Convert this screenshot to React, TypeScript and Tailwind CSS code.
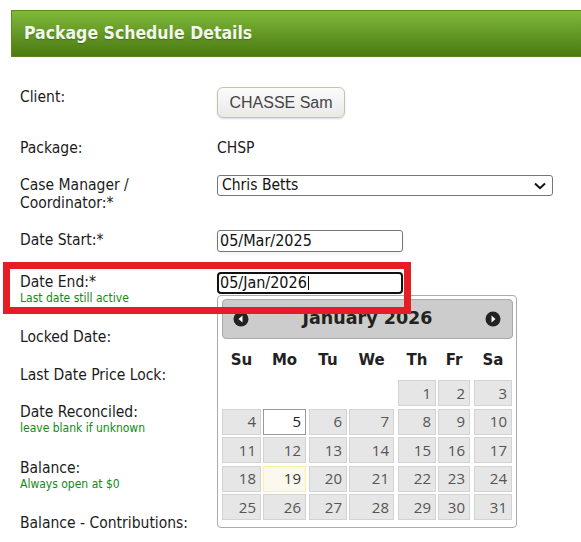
import React from "react";

const FONT = "font-['Tahoma','DejaVu_Sans_Condensed','Liberation_Sans',sans-serif]";

const colW = ["w-[39px]", "w-[43px]", "w-[38px]", "w-[45px]", "w-[38px]", "w-[32px]", "w-[38px]"];
const dayNames = ["Su", "Mo", "Tu", "We", "Th", "Fr", "Sa"];

function Arrow({ dir }: { dir: "l" | "r" }) {
  return (
    <svg width="16" height="16" viewBox="0 0 16 16">
      <circle cx="8" cy="8" r="7.5" fill="#222" />
      {dir === "l" ? (
        <path d="M9.5 4.5 L5.5 8 L9.5 11.5 Z" fill="#fff" />
      ) : (
        <path d="M6.5 4.5 L10.5 8 L6.5 11.5 Z" fill="#fff" />
      )}
    </svg>
  );
}

function Calendar() {
  const cells: (number | null)[] = [null, null, null, null];
  for (let d = 1; d <= 31; d++) cells.push(d);
  return (
    <div className="absolute left-[217px] top-[295px] w-[300px] bg-white border border-[#aaaaaa] rounded-[4px] px-[4px] pt-[3px] pb-[7px]">
      <div className="relative h-[40px] w-[291px] bg-[#cccccc] border border-[#aaaaaa] rounded-[4px] flex items-center justify-center">
        <span className="font-['DejaVu_Sans',sans-serif] font-bold text-[17.5px] text-[#222222] leading-none">January 2026</span>
        <div className="absolute left-[10px] top-[11px]"><Arrow dir="l" /></div>
        <div className="absolute right-[11px] top-[11px]"><Arrow dir="r" /></div>
      </div>
      <div className="mt-[2px] h-[38px] grid grid-cols-[41px_46px_40px_49px_40px_36px_40px] items-center">
        {dayNames.map((n, i) => (
          <div key={n} className={`${colW[i]} text-center font-['DejaVu_Sans',sans-serif] font-bold text-[15px] text-[#222222]`}>
            {n}
          </div>
        ))}
      </div>
      <div className="mt-[1px] grid grid-cols-[41px_46px_40px_49px_40px_36px_40px] gap-y-[2.5px]">
        {cells.map((d, i) => {
          const col = i % 7;
          if (d === null) return <div key={i} className={`${colW[col]} h-[26px]`} />;
          let cls = "bg-[#e6e6e6] border-[#d3d3d3] text-[#555555]";
          if (d === 5) cls = "bg-white border-[#999999] text-[#212121]";
          if (d === 19) cls = "bg-[#fbf9ee] border-[#fcefa1] text-[#363636]";
          return (
            <div
              key={i}
              className={`${colW[col]} h-[26px] border ${cls} flex items-center justify-end pr-[4px] font-['Open_Sans',sans-serif] text-[15px] leading-none`}
            >
              {d}
            </div>
          );
        })}
      </div>
    </div>
  );
}

function Label({ children, sub }: { children: React.ReactNode; sub?: string }) {
  return (
    <div className="w-[197px] shrink-0 pt-[1px]">
      <div className="text-[15.5px] leading-[18px] text-[#1c1c1c]">{children}</div>
      {sub && <div className="text-[12px] leading-[15px] text-[#108a10]">{sub}</div>}
    </div>
  );
}

export default function App() {
  return (
    <div className={`relative w-[581px] h-[542px] overflow-hidden bg-white ${FONT}`}>
      <div className="pt-[10px] pl-[11px]">
        <div className="h-[47px] mr-[-20px] border border-[#5a8a1c] bg-gradient-to-b from-[#80b93a] to-[#4b7a10] flex items-center pl-[12px]">
          <span className="text-[17.5px] font-bold text-[#f2f7ec] leading-none [text-shadow:0_1px_1px_rgba(0,0,0,0.25)]">
            Package Schedule Details
          </span>
        </div>

        <div className="pl-[9px] flex flex-col">
          <div className="mt-[30px] flex items-start">
            <Label>Client:</Label>
            <div className="h-[31px] w-[128px] rounded-[6px] border border-[#c8c3a6] bg-gradient-to-b from-[#fbfbfb] to-[#e9e9e9] shadow-[0_1px_2px_rgba(0,0,0,0.15)] flex items-center justify-center font-['Liberation_Sans',Arial,sans-serif] text-[16px] text-[#444444]">
              CHASSE Sam
            </div>
          </div>

          <div className="mt-[21px] flex items-start">
            <div className="w-[197px] shrink-0 text-[15.5px] leading-[18px] text-[#1c1c1c]">Package:</div>
            <div className="text-[15.5px] leading-[18px] text-[#1c1c1c]">CHSP</div>
          </div>

          <div className="mt-[18px] flex items-start">
            <Label>
              Case Manager /<br />
              Coordinator:*
            </Label>
            <div className="h-[21px] w-[336px] border border-[#767676] rounded-[3px] bg-white flex items-center justify-between pl-[4px] pr-[6px]">
              <span className="text-[15.5px] leading-none text-[#111111]">Chris Betts</span>
              <svg width="12" height="8" viewBox="0 0 12 8">
                <path d="M1 1.5 L6 6.2 L11 1.5" fill="none" stroke="#111" strokeWidth="2" />
              </svg>
            </div>
          </div>

          <div className="mt-[18px] flex items-start">
            <Label>Date Start:*</Label>
            <div className="h-[22px] w-[186px] border border-[#767676] rounded-[3px] bg-white flex items-center pl-[2px] shadow-[0_2px_4px_rgba(0,0,0,0.06)]">
              <span className="text-[16px] leading-none text-[#111111]">05/Mar/2025</span>
            </div>
          </div>

          <div className="mt-[20px] flex items-start">
            <Label sub="Last date still active">Date End:*</Label>
            <div className="h-[22px] w-[186px] border-2 border-[#111111] rounded-[4px] bg-white flex items-center pl-[1px]">
              <span className="text-[16px] leading-none text-[#111111]">05/Jan/2026</span>
              <span className="ml-[1px] w-[1px] h-[14px] bg-black" />
            </div>
          </div>

          <div className="mt-[21px] flex items-start">
            <Label>Locked Date:</Label>
          </div>

          <div className="mt-[19px] flex items-start">
            <Label>Last Date Price Lock:</Label>
          </div>

          <div className="mt-[18px] flex items-start">
            <Label sub="leave blank if unknown">Date Reconciled:</Label>
          </div>

          <div className="mt-[22px] flex items-start">
            <Label sub="Always open at $0">Balance:</Label>
          </div>

          <div className="mt-[21px] flex items-start">
            <Label>Balance - Contributions:</Label>
          </div>
        </div>
      </div>

      <Calendar />

      <div className="absolute left-[3px] top-[262px] w-[408px] h-[52px] border-[7px] border-[#e61d25] pointer-events-none" />
    </div>
  );
}
